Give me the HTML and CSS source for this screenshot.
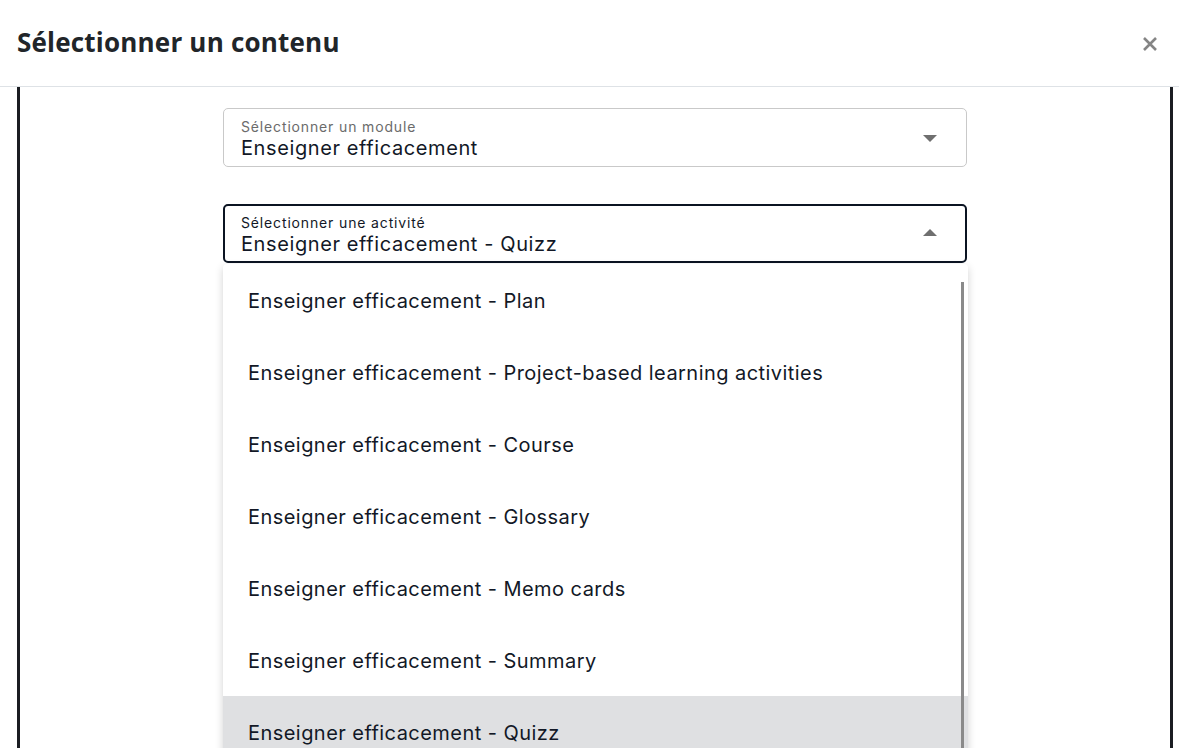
FILE: index.html
```html
<!DOCTYPE html>
<html lang="fr">
<head>
    <meta charset="UTF-8">
    <meta name="viewport" content="width=device-width, initial-scale=1.0">
    <title>Sélectionner un contenu</title>
    <link rel="stylesheet" href="styles.css">
</head>
<body>
    <div class="modal">
        <div class="modal-header">
            <h1>Sélectionner un contenu</h1>
            <button class="close" aria-label="Fermer">
                <svg width="16" height="16" viewBox="0 0 16 16">
                    <path d="M2 2 L14 14 M14 2 L2 14" stroke="#858585" stroke-width="2.6" stroke-linecap="butt"/>
                </svg>
            </button>
        </div>

        <div class="modal-body">
            <div class="fields">
                <div class="select">
                    <div class="select-text">
                        <span class="label">Sélectionner un module</span>
                        <span class="value">Enseigner efficacement</span>
                    </div>
                    <span class="caret"></span>
                </div>

                <div class="select open">
                    <div class="select-text">
                        <span class="label">Sélectionner une activité</span>
                        <span class="value">Enseigner efficacement - Quizz</span>
                    </div>
                    <span class="caret up"></span>

                    <ul class="menu">
                        <li>Enseigner efficacement - Plan</li>
                        <li>Enseigner efficacement - Project-based learning activities</li>
                        <li>Enseigner efficacement - Course</li>
                        <li>Enseigner efficacement - Glossary</li>
                        <li>Enseigner efficacement - Memo cards</li>
                        <li>Enseigner efficacement - Summary</li>
                        <li class="active">Enseigner efficacement - Quizz</li>
                    </ul>
                </div>
            </div>
        </div>
    </div>
</body>
</html>
```

FILE: styles.css
```css
html, body {
    margin: 0;
    height: 100%;
    overflow: hidden;
    background: #fff;
}

body {
    font-family: "Inter", "Noto Sans", sans-serif;
    color: #121826;
}

.modal {
    display: flex;
    flex-direction: column;
    height: 100%;
}

.modal-header {
    height: 86px;
    flex-shrink: 0;
    display: flex;
    align-items: center;
    justify-content: space-between;
    padding: 0 21px 0 17px;
    border-bottom: 1px solid #dee2e6;
}

h1 {
    margin: 0;
    font-family: "Open Sans", sans-serif;
    font-size: 26px;
    font-weight: 700;
    letter-spacing: 0.2px;
    color: #212529;
    padding-bottom: 2px;
}

.close {
    background: none;
    border: none;
    padding: 0;
    cursor: pointer;
    display: flex;
    margin-top: 2px;
}

.modal-body {
    flex: 1;
    margin: 0 6px 0 17px;
    border-left: 3px solid #1b1d22;
    border-right: 3px solid #1b1d22;
    padding-top: 21px;
}

.fields {
    width: 744px;
    margin: 0 auto;
    display: flex;
    flex-direction: column;
    gap: 37px;
}

.select {
    position: relative;
    height: 59px;
    box-sizing: border-box;
    border: 1px solid #c9c9c9;
    border-radius: 5px;
    display: flex;
    align-items: center;
    padding: 0 29px 0 17px;
}

.select.open {
    border: 2px solid #0b1422;
    padding-left: 16px;
    padding-right: 28px;
}

.select-text {
    flex: 1;
    display: flex;
    flex-direction: column;
    padding-top: 4px;
}

.label {
    font-size: 14px;
    letter-spacing: 0.85px;
    color: #6b6b6b;
    line-height: 17px;
}

.open .label {
    color: #121826;
}

.value {
    font-size: 20px;
    letter-spacing: 0.6px;
    line-height: 27px;
}

.caret {
    width: 0;
    height: 0;
    border-left: 7.5px solid transparent;
    border-right: 7.5px solid transparent;
    border-top: 7px solid #6f6f6f;
    margin-top: 2px;
}

.caret.up {
    border-top: none;
    border-bottom: 7px solid #6f6f6f;
    margin-top: -2px;
}

.menu {
    position: absolute;
    top: 58px;
    left: -2px;
    right: -3px;
    margin: 0;
    padding: 0;
    list-style: none;
    background: #fff;
    border-radius: 4px 4px 0 0;
    box-shadow: 0 3px 8px rgba(0, 0, 0, 0.18);
    z-index: 10;
}

.menu::after {
    content: "";
    position: absolute;
    top: 18px;
    right: 4px;
    width: 3px;
    height: 600px;
    background: #8a8a8a;
}

.menu li {
    height: 72px;
    box-sizing: border-box;
    display: flex;
    align-items: center;
    padding: 2px 0 0 25px;
    font-size: 20px;
    letter-spacing: 0.45px;
}

.menu li.active {
    background: #dfe0e2;
}
```
